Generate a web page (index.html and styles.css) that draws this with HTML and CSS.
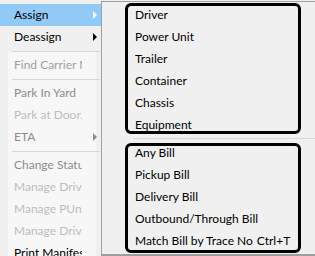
FILE: index.html
```html
<!DOCTYPE html>
<html>
<head>
<meta charset="utf-8">
<link rel="stylesheet" href="styles.css">
</head>
<body>
<div class="screen">
  <div class="menu main">
    <div class="item hl"><span class="label">Assign</span><span class="arrow light"></span></div>
    <div class="item"><span class="label">Deassign</span><span class="arrow"></span></div>
    <div class="sep"></div>
    <div class="item dis"><span class="label">Find Carrier Manifest</span></div>
    <div class="sep"></div>
    <div class="item mid"><span class="label">Park In Yard</span></div>
    <div class="item dis2"><span class="label">Park at Door...</span></div>
    <div class="item mid"><span class="label">ETA</span><span class="arrow grey"></span></div>
    <div class="sep"></div>
    <div class="item mid"><span class="label">Change Status</span></div>
    <div class="item dis2"><span class="label">Manage Drivers</span></div>
    <div class="item dis2"><span class="label">Manage PUnits</span></div>
    <div class="item dis2"><span class="label">Manage Drivers</span></div>
    <div class="item"><span class="label">Print Manifest</span></div>
  </div>
  <div class="menu sub">
    <div class="group first">
      <div class="item">Driver</div>
      <div class="item">Power Unit</div>
      <div class="item">Trailer</div>
      <div class="item">Container</div>
      <div class="item">Chassis</div>
      <div class="item">Equipment</div>
    </div>
    <div class="sep"></div>
    <div class="group second">
      <div class="item">Any Bill</div>
      <div class="item">Pickup Bill</div>
      <div class="item">Delivery Bill</div>
      <div class="item">Outbound/Through Bill</div>
      <div class="item">Match Bill by Trace No<span class="key">Ctrl+T</span></div>
    </div>
  </div>
</div>
</body>
</html>
```

FILE: styles.css
```css
html, body {
  margin: 0;
  padding: 0;
  background: #f0f0f0;
}
body {
  width: 315px;
  height: 256px;
  overflow: hidden;
  font-family: Lato, "Noto Sans", sans-serif;
  font-size: 12px;
  color: #000;
}
.screen {
  display: flex;
  height: 256px;
}
.menu.main {
  width: 101px;
  flex: none;
  padding-top: 4px;
  position: relative;
  background: #f0f0f0;
}
.menu.main::before {
  content: "";
  position: absolute;
  left: 8px;
  top: 52px;
  width: 88px;
  bottom: 0;
  background: #f7f7f7;
}
.main .item {
  position: relative;
  box-sizing: border-box;
  height: 22px;
  display: flex;
  align-items: center;
  padding-left: 14px;
  padding-bottom: 1px;
}
.main .item.hl {
  background: #91c9f7;
}
.main .label {
  display: block;
  width: 68px;
  overflow: hidden;
  white-space: nowrap;
}
.main .item.dis { color: #a0a0a0; }
.main .item.mid { color: #8c8c8c; }
.main .item.dis2 { color: #bdbdbd; }
.arrow {
  margin-left: auto;
  margin-right: 4px;
  width: 0;
  height: 0;
  border-top: 4px solid transparent;
  border-bottom: 4px solid transparent;
  border-left: 4px solid #000;
}
.arrow.light { border-left-color: #f4f8fc; }
.arrow.grey { border-left-color: #8c8c8c; }
.main .sep {
  position: relative;
  height: 6px;
  margin-left: 12px;
}
.main .sep::after {
  content: "";
  position: absolute;
  left: 0;
  right: 1px;
  top: 3px;
  height: 1px;
  background: #d7d7d7;
}
.menu.sub {
  flex: 1;
  margin-top: 1px;
  height: 250px;
  border-top: 1px solid #a0a0a0;
  border-left: 1px solid #a0a0a0;
  border-bottom: 1px solid #a0a0a0;
  padding-top: 2px;
  padding-bottom: 0;
  background: #f0f0f0;
  box-shadow: 0 2px 1px rgba(0, 0, 0, 0.35);
}
.sub .item {
  box-sizing: border-box;
  height: 22px;
  display: flex;
  align-items: center;
  padding-left: 33px;
  padding-bottom: 2px;
  white-space: nowrap;
}
.sub .key {
  margin-left: 4px;
}
.sub .sep {
  height: 6px;
  position: relative;
  margin-left: 31px;
}
.sub .sep::after {
  content: "";
  position: absolute;
  left: 0;
  right: 0;
  top: 2px;
  height: 1px;
  background: #d7d7d7;
}
.group {
  position: relative;
}
.group::after {
  content: "";
  position: absolute;
  left: 23px;
  width: 170px;
  border: 3px solid #000;
  border-radius: 6px;
}
.group.first::after {
  top: -1px;
  bottom: 2px;
}
.group.second::after {
  top: 1px;
  bottom: -1px;
}
```
